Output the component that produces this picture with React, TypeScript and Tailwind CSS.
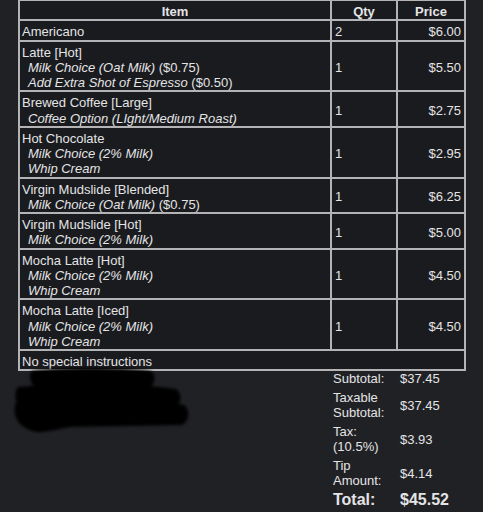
const items = [
  { name: 'Americano', opts: [], qty: '2', price: '$6.00' },
  {
    name: 'Latte [Hot]',
    opts: [
      { label: 'Milk Choice (Oat Milk)', extra: '($0.75)' },
      { label: 'Add Extra Shot of Espresso', extra: '($0.50)' },
    ],
    qty: '1',
    price: '$5.50',
  },
  {
    name: 'Brewed Coffee [Large]',
    opts: [{ label: 'Coffee Option (LIght/Medium Roast)' }],
    qty: '1',
    price: '$2.75',
  },
  {
    name: 'Hot Chocolate',
    opts: [{ label: 'Milk Choice (2% Milk)' }, { label: 'Whip Cream' }],
    qty: '1',
    price: '$2.95',
  },
  {
    name: 'Virgin Mudslide [Blended]',
    opts: [{ label: 'Milk Choice (Oat Milk)', extra: '($0.75)' }],
    qty: '1',
    price: '$6.25',
  },
  {
    name: 'Virgin Mudslide [Hot]',
    opts: [{ label: 'Milk Choice (2% Milk)' }],
    qty: '1',
    price: '$5.00',
  },
  {
    name: 'Mocha Latte [Hot]',
    opts: [{ label: 'Milk Choice (2% Milk)' }, { label: 'Whip Cream' }],
    qty: '1',
    price: '$4.50',
  },
  {
    name: 'Mocha Latte [Iced]',
    opts: [{ label: 'Milk Choice (2% Milk)' }, { label: 'Whip Cream' }],
    qty: '1',
    price: '$4.50',
  },
]

const totals = [
  { label: ['Subtotal:'], value: '$37.45' },
  { label: ['Taxable', 'Subtotal:'], value: '$37.45' },
  { label: ['Tax:', '(10.5%)'], value: '$3.93' },
  { label: ['Tip', 'Amount:'], value: '$4.14' },
]

const cell = 'border border-[#b4b4b6] bg-[#1a1b1e] px-[2px] pt-[3px] pb-0 align-middle'

export default function App() {
  return (
    <div
      className="w-[483px] h-[512px] overflow-hidden bg-[#202125] text-[#e4e4e6] text-[13px] leading-[15px]"
      style={{ fontFamily: '"Liberation Sans", Arial, sans-serif' }}
    >
      <div className="pl-[18px] -mt-px">
        {/* Order table */}
        <table className="w-[448px] table-fixed border-separate border-spacing-0 border border-[#b4b4b6] leading-[15.25px]">
          <colgroup>
            <col className="w-[312px]" />
            <col className="w-[66px]" />
            <col />
          </colgroup>
          <thead>
            <tr>
              <th className={`${cell} text-center font-bold`}>Item</th>
              <th className={`${cell} text-center font-bold`}>Qty</th>
              <th className={`${cell} text-center font-bold`}>Price</th>
            </tr>
          </thead>
          <tbody>
            {items.map((it) => (
              <tr key={it.name}>
                <td className={cell}>
                  <div>{it.name}</div>
                  {it.opts.map((o) => (
                    <div key={o.label} className="pl-[6px]">
                      <span className="italic">{o.label}</span>
                      {o.extra && <span> {o.extra}</span>}
                    </div>
                  ))}
                </td>
                <td className={`${cell} pl-[3px]`}>{it.qty}</td>
                <td className={`${cell} text-right pr-[3px]`}>{it.price}</td>
              </tr>
            ))}
            <tr>
              <td colSpan={3} className={cell}>
                No special instructions
              </td>
            </tr>
          </tbody>
        </table>

        {/* Below table: redacted block + totals */}
        <div className="flex">
          <div className="w-[331px] shrink-0 -ml-[18px]">
            <svg width="200" height="70" viewBox="0 0 200 70" className="-mt-[6px]">
              <defs>
                <filter id="soft" x="-10%" y="-20%" width="120%" height="140%">
                  <feGaussianBlur stdDeviation="1.6" />
                </filter>
              </defs>
              <g fill="#050506" filter="url(#soft)">
                <path d="M32 6 C60 2 120 2 150 6 C156 8 156 18 150 22 L40 24 C30 22 28 10 32 6 Z" />
                <path d="M18 22 C60 18 140 18 176 24 C182 28 182 38 176 42 L22 44 C14 40 14 26 18 22 Z" />
                <path d="M16 38 C70 34 150 34 184 40 C190 44 190 56 182 60 L70 62 C50 66 36 70 28 64 C16 60 12 46 16 38 Z" />
              </g>
            </svg>
          </div>
          <table className="border-separate border-spacing-0 -mt-[2px]">
            <tbody>
              {totals.map((t) => (
                <tr key={t.value + t.label[0]}>
                  <td className="pl-[2px] pr-[6px] py-[2px] w-[69px] align-middle">
                    {t.label.map((l) => (
                      <div key={l}>{l}</div>
                    ))}
                  </td>
                  <td className="py-[2px] align-middle">{t.value}</td>
                </tr>
              ))}
              <tr>
                <td className="pl-[2px] py-[1px] font-bold text-[16px] leading-[18px]">Total:</td>
                <td className="py-[1px] font-bold text-[16px] leading-[18px]">$45.52</td>
              </tr>
            </tbody>
          </table>
        </div>
      </div>
    </div>
  )
}
